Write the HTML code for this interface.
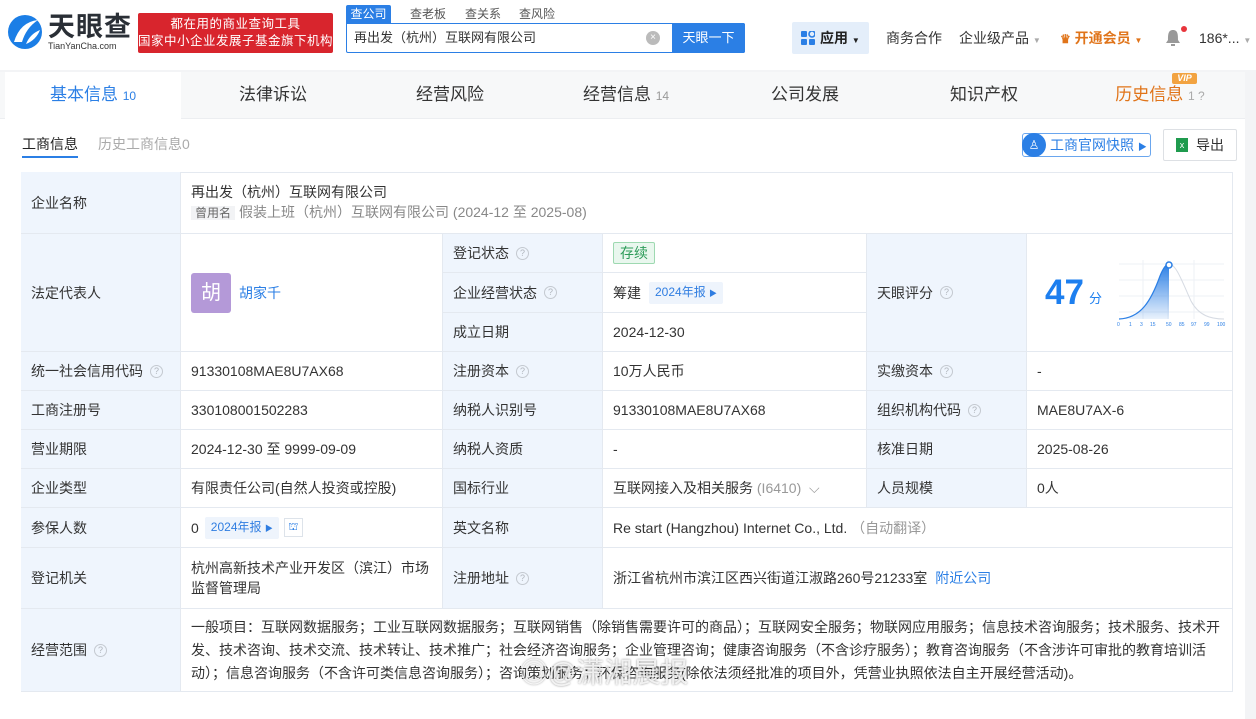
<!DOCTYPE html>
<html><head><meta charset="utf-8"><style>
*{margin:0;padding:0;box-sizing:border-box}
body{width:1256px;height:719px;overflow:hidden;background:#f3f4f6;font-family:"Liberation Sans","Noto Sans CJK SC",sans-serif;color:#333;font-size:14px;position:relative}
.a{position:absolute}
.hdr{left:0;top:0;width:1256px;height:70px;background:#fff}
.tabs{left:0;top:72px;width:1245px;height:47px;background:#f7f8f9;border-bottom:1px solid #eceef1}
.tab{position:absolute;top:72px;height:47px;line-height:46px;font-size:17px;color:#333;text-align:center}
.card{left:0;top:119px;width:1245px;height:600px;background:#fff}
.c{position:absolute;border-right:1px solid #e4e9f0;border-bottom:1px solid #e4e9f0;display:flex;align-items:center;padding-left:10px;font-size:14px;color:#333;line-height:20px}
.l{background:#eff5fd}
.q{display:inline-block;width:13px;height:13px;border:1px solid #c4c9d0;border-radius:50%;font-size:9px;line-height:11px;text-align:center;color:#b0b5bc;margin-left:7px}
.nb{background:#eef4fc;color:#2f7de1;font-size:12px;padding:0 6px;line-height:20px;margin-left:8px;border-radius:2px}
</style></head><body>
<div class="a hdr"></div>
<svg class="a" style="left:6px;top:12px" width="38" height="40" viewBox="0 0 38 40"><circle cx="19" cy="20" r="17" fill="#1b7ee6"/><path d="M8 30 Q14 10 32 8 Q20 16 16 30 Z" fill="#fff"/><path d="M20 32 Q24 22 34 18 Q30 28 20 32Z" fill="#fff"/></svg>
<div class="a" style="left:48px;top:11px;font-size:27px;font-weight:bold;color:#2a2f36;letter-spacing:1px;line-height:32px">天眼查</div>
<div class="a" style="left:48px;top:41px;font-size:9px;color:#333;line-height:10px">TianYanCha.com</div>
<div class="a" style="left:138px;top:13px;width:195px;height:40px;background:#d8252d;border-radius:2px;color:#fff;font-size:12.5px;line-height:17px;text-align:center;padding-top:3px;letter-spacing:0.5px">都在用的商业查询工具<br>国家中小企业发展子基金旗下机构</div>
<div class="a" style="left:346px;top:5px;width:45px;height:18px;background:#2b7fe5;color:#fff;font-size:12px;text-align:center;line-height:18px;border-radius:2px 2px 0 0">查公司</div>
<div class="a" style="left:410px;top:5px;font-size:12px;color:#555;line-height:18px">查老板</div>
<div class="a" style="left:465px;top:5px;font-size:12px;color:#555;line-height:18px">查关系</div>
<div class="a" style="left:519px;top:5px;font-size:12px;color:#555;line-height:18px">查风险</div>
<div class="a" style="left:346px;top:23px;width:399px;height:30px;border:1px solid #2b7fe5;border-radius:0 2px 2px 2px;background:#fff"></div>
<div class="a" style="left:354px;top:28px;font-size:13px;line-height:20px;color:#333">再出发（杭州）互联网有限公司</div>
<div class="a" style="left:646px;top:31px;width:14px;height:14px;border-radius:50%;background:#bbb;color:#fff;font-size:10px;text-align:center;line-height:14px">×</div>
<div class="a" style="left:672px;top:23px;width:73px;height:30px;background:#2b7fe5;color:#fff;font-size:13px;text-align:center;line-height:30px;border-radius:0 2px 2px 0">天眼一下</div>
<div class="a" style="left:792px;top:22px;width:77px;height:32px;background:#e4eefa;border-radius:2px"></div>
<svg class="a" style="left:801px;top:31px" width="14" height="14"><rect x="0" y="0" width="6" height="6" rx="1" fill="#2b7fe5"/><rect x="8" y="0" width="6" height="6" rx="3" fill="none" stroke="#2b7fe5" stroke-width="1.6"/><rect x="0" y="8" width="6" height="6" rx="1" fill="#2b7fe5"/><rect x="8" y="8" width="6" height="6" rx="1" fill="#2b7fe5"/></svg>
<div class="a" style="left:820px;top:28px;font-size:14px;line-height:20px;color:#222;font-weight:bold">应用 <span style="font-size:8px">▼</span></div>
<div class="a" style="left:886px;top:28px;font-size:14px;line-height:20px;color:#333">商务合作</div>
<div class="a" style="left:959px;top:28px;font-size:14px;line-height:20px;color:#333">企业级产品 <span style="font-size:8px;color:#aaa">▼</span></div>
<div class="a" style="left:1060px;top:28px;font-size:14px;line-height:20px;color:#e0741a;font-weight:bold"><span style="font-size:12px">♛</span> 开通会员 <span style="font-size:8px">▼</span></div>
<svg class="a" style="left:1165px;top:29px" width="16" height="18"><path d="M8 1 C3 1 3 6 3 11 L1 14 L15 14 L13 11 C13 6 13 1 8 1Z" fill="#999"/><rect x="6" y="15" width="4" height="2" fill="#999"/></svg>
<div class="a" style="left:1181px;top:26px;width:6px;height:6px;border-radius:50%;background:#e8353c"></div>
<div class="a" style="left:1199px;top:28px;font-size:14px;line-height:20px;color:#333">186*... <span style="font-size:8px;color:#aaa">▼</span></div>

<div class="a tabs"></div>
<div class="a" style="left:5px;top:72px;width:176px;height:47px;background:#fff"></div>
<div class="tab" style="left:5px;width:176px;color:#2b7fe5">基本信息 <span style="font-size:12px">10</span></div>
<div class="tab" style="left:185px;width:176px">法律诉讼</div>
<div class="tab" style="left:362px;width:176px">经营风险</div>
<div class="tab" style="left:538px;width:176px">经营信息 <span style="font-size:12px;color:#999">14</span></div>
<div class="tab" style="left:717px;width:176px">公司发展</div>
<div class="tab" style="left:896px;width:176px">知识产权</div>
<div class="tab" style="left:1072px;width:176px;color:#e0741a">历史信息 <span style="font-size:12px;color:#aaa">1 ?</span></div>
<div class="a" style="left:1172px;top:73px;width:25px;height:11px;background:#f2a341;color:#fff;font-size:9px;font-weight:bold;font-style:italic;text-align:center;line-height:11px;border-radius:2px">VIP</div>

<div class="a card"></div>
<div class="a" style="left:22px;top:134px;font-size:14px;line-height:20px;color:#222">工商信息</div>
<div class="a" style="left:22px;top:156px;width:56px;height:2px;background:#2b7fe5"></div>
<div class="a" style="left:98px;top:134px;font-size:14px;line-height:20px;color:#aaa">历史工商信息0</div>
<div class="a" style="left:1022px;top:133px;width:129px;height:24px;border:1px solid #6aa6ee;border-radius:3px"></div>
<div class="a" style="left:1022px;top:133px;width:24px;height:24px;border-radius:50%;background:#2b7fe5;color:#fff;font-size:12px;text-align:center;line-height:24px">♙</div>
<div class="a" style="left:1050px;top:135px;font-size:14px;line-height:20px;color:#2b7fe5">工商官网快照 <span style="font-size:9px">▶</span></div>
<div class="a" style="left:1163px;top:129px;width:74px;height:32px;border:1px solid #dde0e4;border-radius:2px"></div>
<div class="a" style="left:1176px;top:138px;width:12px;height:14px;background:#1f9b4e;color:#fff;font-size:9px;text-align:center;line-height:14px">x</div>
<div class="a" style="left:1196px;top:135px;font-size:14px;line-height:20px;color:#333">导出</div>

<div class="a" style="left:21px;top:172px;width:1212px;height:520px;border-top:1px solid #e4e9f0;border-left:1px solid #e4e9f0"></div>
<div class="c l" style="left:21px;top:172px;width:160px;height:62px">企业名称</div>
<div class="c" style="left:181px;top:172px;width:1052px;height:62px;display:block;padding-top:10px">再出发（杭州）互联网有限公司<br><span style="background:#f2f3f5;color:#666;font-size:12px;padding:0 4px;margin-right:4px">曾用名</span><span style="color:#888">假装上班（杭州）互联网有限公司 (2024-12 至 2025-08)</span></div>

<div class="c l" style="left:21px;top:234px;width:160px;height:118px">法定代表人</div>
<div class="c" style="left:181px;top:234px;width:262px;height:118px"><span style="display:inline-block;width:40px;height:40px;background:#b499d8;color:#fff;border-radius:3px;font-size:20px;text-align:center;line-height:40px">胡</span><span style="color:#2b7fe5;margin-left:8px">胡家千</span></div>
<div class="c l" style="left:443px;top:234px;width:160px;height:39px">登记状态<span class="q">?</span></div>
<div class="c" style="left:603px;top:234px;width:264px;height:39px"><span style="background:#e9f7ee;border:1px solid #9ed9b1;color:#2e9c5a;padding:0 6px;border-radius:2px">存续</span></div>
<div class="c l" style="left:443px;top:273px;width:160px;height:40px">企业经营状态<span class="q">?</span></div>
<div class="c" style="left:603px;top:273px;width:264px;height:40px">筹建<span class="nb">2024年报 <span style="font-size:8px">▶</span></span></div>
<div class="c l" style="left:443px;top:313px;width:160px;height:39px">成立日期</div>
<div class="c" style="left:603px;top:313px;width:264px;height:39px">2024-12-30</div>
<div class="c l" style="left:867px;top:234px;width:160px;height:118px">天眼评分<span class="q">?</span></div>
<div class="c" style="left:1027px;top:234px;width:206px;height:118px;padding-left:18px"><span style="font-size:35px;font-weight:bold;color:#1d7fef">47</span><span style="font-size:13px;color:#1d7fef;margin:12px 0 0 5px">分</span></div>
<svg class="a" style="left:1116px;top:256px" width="112" height="76" viewBox="0 0 112 76"><g stroke="#eef1f5" stroke-width="1"><line x1="3" y1="8" x2="108" y2="8"/><line x1="3" y1="24" x2="108" y2="24"/><line x1="3" y1="40" x2="108" y2="40"/><line x1="3" y1="56" x2="108" y2="56"/><line x1="27" y1="4" x2="27" y2="63"/><line x1="52" y1="4" x2="52" y2="63"/><line x1="78" y1="4" x2="78" y2="63"/></g><defs><linearGradient id="g" x1="0" y1="0" x2="0" y2="1"><stop offset="0" stop-color="#2b7fe5"/><stop offset="1" stop-color="#2b7fe5" stop-opacity="0.1"/></linearGradient></defs><path d="M3 63 C25 62 35 45 44 20 C48 10 51 8 53 8 L53 63Z" fill="url(#g)"/><path d="M53 8 C60 8 66 25 75 45 C83 60 95 63 108 63" fill="none" stroke="#d6dbe3"/><path d="M3 63 C25 62 35 45 44 20 C48 10 51 8 53 8" fill="none" stroke="#2b7fe5" stroke-width="1.2"/><circle cx="53" cy="9" r="3" fill="#fff" stroke="#2b7fe5" stroke-width="1.5"/><text y="70" font-size="5" fill="#2b7fe5" font-family="Liberation Sans"><tspan x="1">0</tspan><tspan x="13">1</tspan><tspan x="24">3</tspan><tspan x="34">15</tspan><tspan x="50">50</tspan><tspan x="63">85</tspan><tspan x="75">97</tspan><tspan x="88">99</tspan><tspan x="101">100</tspan></text></svg>

<div class="c l" style="left:21px;top:352px;width:160px;height:39px">统一社会信用代码<span class="q">?</span></div>
<div class="c" style="left:181px;top:352px;width:262px;height:39px">91330108MAE8U7AX68</div>
<div class="c l" style="left:443px;top:352px;width:160px;height:39px">注册资本<span class="q">?</span></div>
<div class="c" style="left:603px;top:352px;width:264px;height:39px">10万人民币</div>
<div class="c l" style="left:867px;top:352px;width:160px;height:39px">实缴资本<span class="q">?</span></div>
<div class="c" style="left:1027px;top:352px;width:206px;height:39px">-</div>

<div class="c l" style="left:21px;top:391px;width:160px;height:39px">工商注册号</div>
<div class="c" style="left:181px;top:391px;width:262px;height:39px">330108001502283</div>
<div class="c l" style="left:443px;top:391px;width:160px;height:39px">纳税人识别号</div>
<div class="c" style="left:603px;top:391px;width:264px;height:39px">91330108MAE8U7AX68</div>
<div class="c l" style="left:867px;top:391px;width:160px;height:39px">组织机构代码<span class="q">?</span></div>
<div class="c" style="left:1027px;top:391px;width:206px;height:39px">MAE8U7AX-6</div>

<div class="c l" style="left:21px;top:430px;width:160px;height:39px">营业期限</div>
<div class="c" style="left:181px;top:430px;width:262px;height:39px">2024-12-30 至 9999-09-09</div>
<div class="c l" style="left:443px;top:430px;width:160px;height:39px">纳税人资质</div>
<div class="c" style="left:603px;top:430px;width:264px;height:39px">-</div>
<div class="c l" style="left:867px;top:430px;width:160px;height:39px">核准日期</div>
<div class="c" style="left:1027px;top:430px;width:206px;height:39px">2025-08-26</div>

<div class="c l" style="left:21px;top:469px;width:160px;height:39px">企业类型</div>
<div class="c" style="left:181px;top:469px;width:262px;height:39px">有限责任公司(自然人投资或控股)</div>
<div class="c l" style="left:443px;top:469px;width:160px;height:39px">国标行业</div>
<div class="c" style="left:603px;top:469px;width:264px;height:39px">互联网接入及相关服务<span style="color:#999">&nbsp;(I6410)&nbsp;&nbsp;⌵</span></div>
<div class="c l" style="left:867px;top:469px;width:160px;height:39px">人员规模</div>
<div class="c" style="left:1027px;top:469px;width:206px;height:39px">0人</div>

<div class="c l" style="left:21px;top:508px;width:160px;height:40px">参保人数</div>
<div class="c" style="left:181px;top:508px;width:262px;height:40px">0<span class="nb" style="margin-left:6px">2024年报 <span style="font-size:8px">▶</span></span><span style="display:inline-block;width:19px;height:19px;border:1px solid #dde3ea;margin-left:5px;color:#2b7fe5;font-size:11px;text-align:center;line-height:17px">⛫</span></div>
<div class="c l" style="left:443px;top:508px;width:160px;height:40px">英文名称</div>
<div class="c" style="left:603px;top:508px;width:630px;height:40px">Re start (Hangzhou) Internet Co., Ltd.<span style="color:#999">&nbsp;（自动翻译）</span></div>

<div class="c l" style="left:21px;top:548px;width:160px;height:61px">登记机关</div>
<div class="c" style="left:181px;top:548px;width:262px;height:61px">杭州高新技术产业开发区（滨江）市场<br>监督管理局</div>
<div class="c l" style="left:443px;top:548px;width:160px;height:61px">注册地址<span class="q">?</span></div>
<div class="c" style="left:603px;top:548px;width:630px;height:61px">浙江省杭州市滨江区西兴街道江淑路260号21233室<span style="color:#2b7fe5;margin-left:8px">附近公司</span></div>

<div class="c l" style="left:21px;top:609px;width:160px;height:83px">经营范围<span class="q">?</span></div>
<div class="c" style="left:181px;top:609px;width:1052px;height:83px;line-height:23px;font-size:14px;padding-right:6px">一般项目：互联网数据服务；工业互联网数据服务；互联网销售（除销售需要许可的商品）；互联网安全服务；物联网应用服务；信息技术咨询服务；技术服务、技术开发、技术咨询、技术交流、技术转让、技术推广；社会经济咨询服务；企业管理咨询；健康咨询服务（不含诊疗服务）；教育咨询服务（不含涉许可审批的教育培训活动）；信息咨询服务（不含许可类信息咨询服务）；咨询策划服务；环保咨询服务(除依法须经批准的项目外，凭营业执照依法自主开展经营活动)。</div>
<div class="a" style="left:520px;top:655px;font-size:28px;color:rgba(255,255,255,0.8);text-shadow:0 0 2px rgba(0,0,0,0.45);line-height:36px">◎@潇湘晨报</div>
</body></html>
